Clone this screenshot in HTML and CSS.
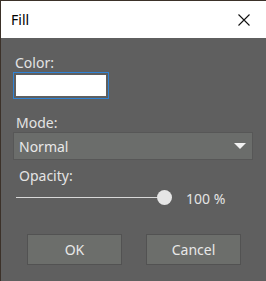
FILE: index.html
```html
<!DOCTYPE html>
<html lang="en">
<head>
    <meta charset="UTF-8">
    <title>Fill</title>
    <link rel="stylesheet" href="styles.css">
</head>
<body>
    <div class="window">
        <div class="titlebar">
            <span class="title">Fill</span>
            <button class="close-btn" aria-label="Close">
                <svg width="12" height="12" viewBox="0 0 12 12">
                    <path d="M0.5 0.5 L11.5 11.5 M11.5 0.5 L0.5 11.5" stroke="#111" stroke-width="1.1" fill="none"/>
                </svg>
            </button>
        </div>

        <div class="content">
            <div class="label">Color:</div>
            <div class="swatch"><div class="swatch-fill"></div></div>

            <div class="label label-mode">Mode:</div>
            <div class="select">
                <span>Normal</span>
                <span class="arrow"></span>
            </div>

            <div class="label label-opacity">Opacity:</div>
            <div class="slider-row">
                <div class="slider">
                    <div class="track"></div>
                    <div class="thumb"></div>
                </div>
                <span class="value">100 %</span>
            </div>

            <div class="buttons">
                <button class="btn">OK</button>
                <button class="btn">Cancel</button>
            </div>
        </div>
    </div>
</body>
</html>
```

FILE: styles.css
```css
* {
    margin: 0;
    padding: 0;
    box-sizing: border-box;
    font-family: 'Noto Sans', sans-serif;
}

body {
    background-color: #3b3129;
    width: 266px;
    height: 281px;
    overflow: hidden;
}

.window {
    margin: 1px 0 0 1px;
    width: 265px;
    height: 280px;
    background-color: #5f5f5f;
}

.titlebar {
    height: 37px;
    background: white;
    display: flex;
    align-items: center;
    justify-content: space-between;
    padding-left: 10px;
}

.title {
    font-size: 14px;
    color: #000;
}

.close-btn {
    width: 46px;
    height: 37px;
    border: none;
    background: transparent;
    display: flex;
    align-items: center;
    justify-content: center;
    margin-right: -1px;
}

.content {
    padding: 15px 13px 0 12px;
}

.label {
    font-size: 14px;
    line-height: 19px;
    color: #e4e4e4;
    padding-left: 2px;
}

.swatch {
    width: 96px;
    height: 27px;
    border: 1px solid #2f83d6;
    padding: 2px;
}

.swatch-fill {
    width: 100%;
    height: 100%;
    background: white;
}

.label-mode {
    margin-top: 14px;
    padding-left: 3px;
}

.select {
    height: 28px;
    border: 1px solid #575757;
    background-color: #6b6d6b;
    display: flex;
    align-items: center;
    justify-content: space-between;
    padding: 0 6px 0 5px;
    font-size: 14px;
    color: #e8e8e8;
}

.arrow {
    width: 0;
    height: 0;
    border-left: 6px solid transparent;
    border-right: 6px solid transparent;
    border-top: 6px solid #f2f2f2;
}

.label-opacity {
    margin-top: 6px;
    padding-left: 6px;
}

.slider-row {
    display: flex;
    align-items: center;
    margin-top: 4px;
    height: 18px;
}

.slider {
    position: relative;
    width: 156px;
    height: 18px;
    margin-left: 3px;
}

.track {
    position: absolute;
    left: 0;
    right: 8px;
    top: 8px;
    height: 1px;
    background: #d8d8d8;
}

.thumb {
    position: absolute;
    right: 0;
    top: 1px;
    width: 15px;
    height: 15px;
    border-radius: 50%;
    background: #e6e6e6;
}

.value {
    margin-left: 14px;
    font-size: 14px;
    color: #e4e4e4;
}

.buttons {
    display: flex;
    justify-content: space-between;
    padding: 0 12px 0 14px;
    margin-top: 27px;
}

.btn {
    width: 95px;
    height: 31px;
    border: 1px solid #525252;
    background-color: #6c6e6b;
    color: #e8e8e8;
    font-size: 14px;
}
```
